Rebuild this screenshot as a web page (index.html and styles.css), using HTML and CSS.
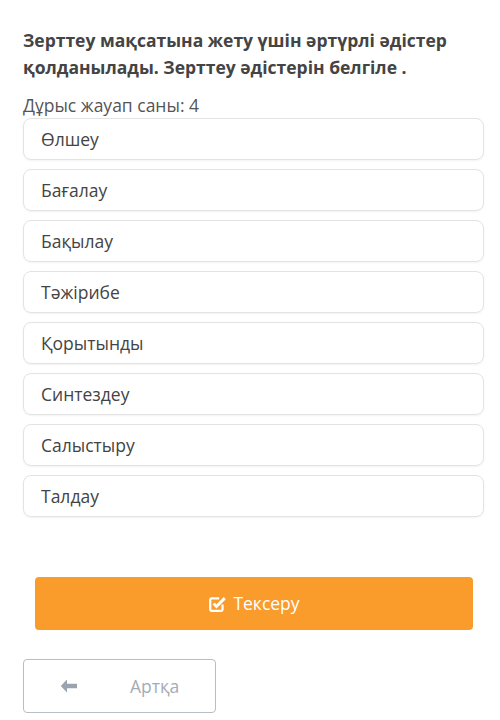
FILE: index.html
```html
<!DOCTYPE html>
<html lang="kk">
<head>
    <meta charset="UTF-8">
    <meta name="viewport" content="width=device-width, initial-scale=1.0">
    <title>Тест</title>
    <link rel="stylesheet" href="styles.css">
</head>
<body>
    <div class="quiz">
        <h2 class="question">Зерттеу мақсатына жету үшін әртүрлі әдістер қолданылады. Зерттеу әдістерін белгіле .</h2>
        <p class="hint">Дұрыс жауап саны: 4</p>
        <div class="options">
            <div class="option">Өлшеу</div>
            <div class="option">Бағалау</div>
            <div class="option">Бақылау</div>
            <div class="option">Тәжірибе</div>
            <div class="option">Қорытынды</div>
            <div class="option">Синтездеу</div>
            <div class="option">Салыстыру</div>
            <div class="option">Талдау</div>
        </div>
        <button class="checkBtn">
            <svg class="checkIcon" width="19" height="19" viewBox="0 0 17 17">
                <path d="M13 9.5v4.2a1.3 1.3 0 0 1-1.3 1.3H3.3A1.3 1.3 0 0 1 2 13.7V5.3A1.3 1.3 0 0 1 3.3 4H10" fill="none" stroke="#fff" stroke-width="2"/>
                <path d="M5 8.5l2.6 2.6L15 3.7" fill="none" stroke="#fff" stroke-width="2.6"/>
            </svg>
            Тексеру
        </button>
        <button class="backBtn">
            <svg width="18" height="14" viewBox="0 0 18 14">
                <path d="M7 0.5L0.8 7 7 13.5V9.2h10V4.8H7z" fill="#9aa3b0"/>
            </svg>
            <span>Артқа</span>
        </button>
    </div>
</body>
</html>
```

FILE: styles.css
```css
body { font-family: 'Open Sans', 'Noto Sans', sans-serif; background: #fff; margin: 0; padding: 0; color: #444; }
.quiz { padding: 27px 16px 0 23px; }
.question { font-size: 17.5px; font-weight: 700; line-height: 27px; color: #444; margin: 0 0 12px; }
.hint { font-size: 17.5px; color: #555; margin: 0 0 1px; line-height: 24px; }
.options { display: flex; flex-direction: column; gap: 9px; }
.option { height: 42px; box-sizing: border-box; border: 1px solid #e3e3e3; border-radius: 8px; box-shadow: 0 1px 2px rgba(0, 0, 0, 0.05); padding: 0 17px; display: flex; align-items: center; font-size: 17.5px; color: #444; }
button { font-family: inherit; cursor: pointer; }
.checkBtn { display: flex; align-items: center; justify-content: center; gap: 6px; width: 438px; height: 53px; margin: 60px 0 0 12px; background: #f99c2b; border: none; border-radius: 4px; color: #fff; font-size: 17.5px; padding: 0 0 2px; }
.checkBtn:hover { background: #f0911c; }
.checkIcon { margin-top: 1px; }
.backBtn { display: flex; align-items: center; width: 193px; height: 54px; margin-top: 29px; background: #fff; border: 1px solid #b9bec5; border-radius: 4px; color: #a4abb5; font-size: 17.5px; padding: 0 0 0 36px; box-sizing: border-box; }
.backBtn span { margin-left: 52px; }
```
